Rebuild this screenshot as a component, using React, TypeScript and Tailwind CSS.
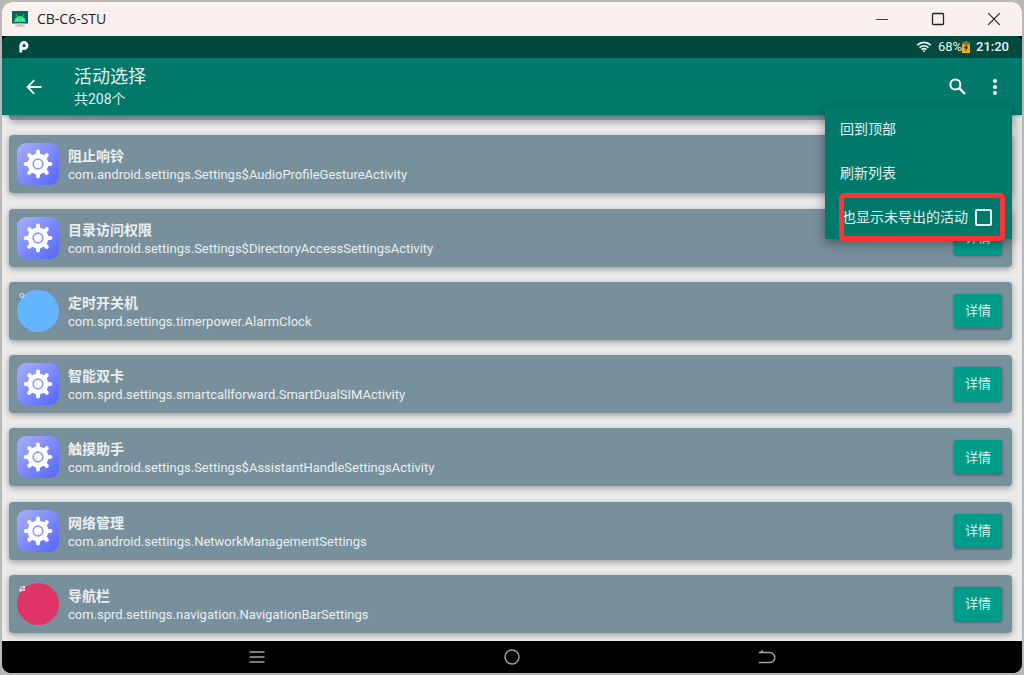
import type { ReactNode } from "react";

type Activity = {
  title: string;
  name: string;
  icon: "gear" | "blue" | "pink";
};

const activities: Activity[] = [
  {
    title: "阻止响铃",
    name: "com.android.settings.Settings$AudioProfileGestureActivity",
    icon: "gear",
  },
  {
    title: "目录访问权限",
    name: "com.android.settings.Settings$DirectoryAccessSettingsActivity",
    icon: "gear",
  },
  {
    title: "定时开关机",
    name: "com.sprd.settings.timerpower.AlarmClock",
    icon: "blue",
  },
  {
    title: "智能双卡",
    name: "com.sprd.settings.smartcallforward.SmartDualSIMActivity",
    icon: "gear",
  },
  {
    title: "触摸助手",
    name: "com.android.settings.Settings$AssistantHandleSettingsActivity",
    icon: "gear",
  },
  {
    title: "网络管理",
    name: "com.android.settings.NetworkManagementSettings",
    icon: "gear",
  },
  {
    title: "导航栏",
    name: "com.sprd.settings.navigation.NavigationBarSettings",
    icon: "pink",
  },
];

const teeth = [0, 45, 90, 135, 180, 225, 270, 315];

function GearIcon() {
  return (
    <svg viewBox="0 0 42 42" className="size-[42px] shrink-0">
      <defs>
        <linearGradient id="gear-bg" x1="0" y1="0" x2="1" y2="1">
          <stop offset="0.05" stopColor="#a3adfb" />
          <stop offset="0.9" stopColor="#5d6cfb" />
        </linearGradient>
      </defs>
      <rect width="42" height="42" rx="9" fill="url(#gear-bg)" />
      <circle cx="21" cy="21" r="10.4" fill="#fff" />
      {teeth.map((angle) => (
        <path
          key={angle}
          d="M17.6 12 L19 10.4 V8.6 A2 2 0 0 1 23 8.6 V10.4 L24.4 12 Z"
          fill="#fff"
          transform={`rotate(${angle} 21 21)`}
        />
      ))}
      <circle
        cx="21"
        cy="21"
        r="4.8"
        fill="none"
        stroke="#8f9df0"
        strokeWidth="1.7"
      />
    </svg>
  );
}

function ActivityIcon({ icon }: { icon: Activity["icon"] }) {
  if (icon === "gear") return <GearIcon />;
  return (
    <svg viewBox="0 0 42 42" className="size-[42px] shrink-0">
      <circle cx="21" cy="21" r="21" fill={icon === "blue" ? "#64b5ff" : "#e03468"} />
      {icon === "blue" ? (
        <circle cx="5" cy="5.5" r="2" fill="none" stroke="#d5dfe5" strokeWidth="1.2" />
      ) : (
        <path d="M2.5 5.6h2.8v2.8H2.5zM5.6 3H8v2.2H5.6zM6 6h2v2H6zM3 3.4h1.4v1H3z" fill="#e8e4ea" />
      )}
    </svg>
  );
}

function ActivityCard({ title, name, icon }: Activity) {
  return (
    <li className="flex h-[58px] items-center rounded bg-[#78909c] pl-2 pr-[10px] shadow-[0_2px_6px_rgba(0,0,0,0.35)]">
      <ActivityIcon icon={icon} />
      <div className="ml-[9px] min-w-0 flex-1 pt-[2px] text-[#e9eef0]">
        <h2 className="text-[14px] font-bold leading-5">{title}</h2>
        <p className="truncate text-[13px] leading-[18px]">{name}</p>
      </div>
      <button className="h-[34px] w-12 rounded-[2px] bg-[#009b89] text-[13px] text-[#d5f2ed] shadow-[0_1px_3px_rgba(0,0,0,0.4)]">
        详情
      </button>
    </li>
  );
}

function NavButton({ label, children }: { label: string; children: ReactNode }) {
  return (
    <button
      aria-label={label}
      className="col-span-2 flex items-center justify-center"
    >
      <svg
        viewBox="0 0 18 18"
        className="size-[18px]"
        fill="none"
        stroke="#a3a3a3"
        strokeWidth="1.4"
      >
        {children}
      </svg>
    </button>
  );
}

function TitleBar() {
  return (
    <header className="flex h-[34px] items-center bg-[#f9f1ef] pl-[10px] text-[#1f1f1f]">
      <svg viewBox="0 0 16 16" className="size-4">
        <rect width="16" height="12.5" fill="#07665c" />
        <path d="M2 11a6 6 0 0 1 12 0z" fill="#3ddc84" />
        <path d="M4 3l1.6 3M12 3l-1.6 3" stroke="#3ddc84" strokeWidth="0.8" />
        <circle cx="5.4" cy="8.6" r="0.7" fill="#fff" />
        <circle cx="10.6" cy="8.6" r="0.7" fill="#fff" />
        <path d="M5 12.5h6v1.3h2V16H3v-2.2h2z" fill="#cfcccb" />
      </svg>
      <h1 className="ml-[9px] flex-1 font-['Open_Sans',sans-serif] text-[14px] leading-5">
        CB-C6-STU
      </h1>
      <div className="flex h-full">
        <button aria-label="最小化" className="flex w-14 items-center justify-center">
          <svg viewBox="0 0 14 14" className="size-[14px]" stroke="#444" strokeWidth="1.1">
            <path d="M1 7.5h12" />
          </svg>
        </button>
        <button aria-label="最大化" className="flex w-14 items-center justify-center">
          <svg viewBox="0 0 14 14" className="size-[14px]" fill="none" stroke="#222" strokeWidth="1.3">
            <rect x="1.5" y="1.5" width="11" height="11" rx="1" />
          </svg>
        </button>
        <button aria-label="关闭" className="flex w-14 items-center justify-center">
          <svg viewBox="0 0 14 14" className="size-[14px]" stroke="#222" strokeWidth="1.2">
            <path d="M1.2 1.2l11.6 11.6M12.8 1.2L1.2 12.8" />
          </svg>
        </button>
      </div>
    </header>
  );
}

function StatusBar() {
  return (
    <div className="flex h-[22px] items-center justify-between rounded-t-[6px] bg-[#00493f] pl-[17px] pr-[13px] text-[#eef5f4]">
      {/* rounded Android P mark: stem and ring */}
      <svg viewBox="0 0 10 12" className="h-3 w-[10px]">
        <rect x="0.4" y="4" width="2.8" height="7.6" rx="0.6" fill="#fff" />
        <circle cx="5" cy="4.6" r="3.1" fill="none" stroke="#fff" strokeWidth="2.8" />
      </svg>
      <div className="flex items-center text-[13px] font-medium">
        <svg viewBox="0 0 16 12" className="h-3 w-4" fill="none" stroke="#e6f0ee" strokeWidth="1.7">
          <path d="M1.2 4.2a9.6 9.6 0 0 1 13.6 0M3.5 6.6a6.4 6.4 0 0 1 9 0M5.6 8.7a3.4 3.4 0 0 1 4.8 0" />
          <path d="M6.4 9.4h3.2L8 11.4z" fill="#e6f0ee" stroke="none" />
        </svg>
        <span className="ml-[6px] font-normal">68%</span>
        <svg viewBox="0 0 8 12" className="h-3 w-2">
          <path d="M2.4 0h3.2v1.3H8V4H0V1.3h2.4z" fill="#7d7040" />
          <path d="M0 3.5h8V12H0z" fill="#ffad05" />
          <path d="M4.8 2.6L1.8 7.2h1.8v3.2l2.8-4.6H4.8z" fill="#3d3c1c" />
        </svg>
        <span className="ml-[6px]">21:20</span>
      </div>
    </div>
  );
}

function AppBar() {
  return (
    <div className="relative z-10 flex h-[57px] items-center bg-[#00796b] pl-5 pr-[15px] text-white shadow-[0_1px_3px_rgba(0,0,0,0.3)]">
      <button aria-label="返回" className="flex size-6 items-center justify-center">
        <svg viewBox="0 0 16 16" className="size-4" fill="none" stroke="#fff" strokeWidth="1.8">
          <path d="M15.5 8H2M8.2 1.2L1.6 8l6.6 6.8" />
        </svg>
      </button>
      <div className="ml-7 flex-1 text-[#e2efed]">
        <div className="text-[18px] leading-6">活动选择</div>
        <div className="text-[14px] leading-5">共208个</div>
      </div>
      <button aria-label="搜索" className="flex size-6 items-center justify-center">
        <svg viewBox="0 0 17 17" className="size-[17px]" fill="none" stroke="#fff" strokeWidth="2">
          <circle cx="6.4" cy="6.4" r="5" />
          <path d="M10.2 10.2l5.8 5.8" strokeWidth="2.4" />
        </svg>
      </button>
      <button aria-label="更多" className="ml-[14px] flex size-6 items-center justify-center">
        <svg viewBox="0 0 4 16" className="h-4 w-1" fill="#fff">
          <circle cx="2" cy="2" r="2" />
          <circle cx="2" cy="8" r="2" />
          <circle cx="2" cy="14" r="2" />
        </svg>
      </button>
    </div>
  );
}

function OverflowMenu() {
  return (
    <div className="absolute right-[10px] top-[105px] z-20 w-[187px] bg-[#00796b] text-[14px] text-[#e4f1ef] shadow-[0_4px_12px_rgba(0,0,0,0.4)]">
      <button className="flex h-11 w-full items-center pl-[15px]">回到顶部</button>
      <button className="flex h-11 w-full items-center pl-[15px]">刷新列表</button>
      <label className="flex h-11 items-center justify-between pl-[17px] pr-5">
        也显示未导出的活动
        <input
          type="checkbox"
          className="size-[17px] appearance-none rounded-[2px] border-2 border-[#e4f1ef] checked:bg-[#e4f1ef]"
        />
      </label>
      {/* highlight around the last entry */}
      <div className="pointer-events-none absolute -bottom-[2px] left-[14px] right-[7px] h-12 rounded-[5px] border-[5px] border-[#ff3434]" />
    </div>
  );
}

export default function App() {
  return (
    <div className="flex min-h-screen flex-col bg-[#b9b7b7] p-[2px] font-['Roboto','Noto_Sans_CJK_SC',sans-serif]">
      <div className="relative flex flex-1 flex-col overflow-hidden rounded-[9px] bg-black">
        <TitleBar />
        <StatusBar />
        <AppBar />
        <OverflowMenu />
        <main className="flex flex-1 flex-col bg-[#ebebeb] pb-2 pl-[7px] pr-[10px]">
          <ul className="flex flex-1 flex-col justify-between gap-y-3">
            {/* bottom edge of the card scrolled under the bar */}
            <li
              aria-hidden="true"
              className="h-[5px] rounded-b bg-[#78909c] shadow-[0_2px_6px_rgba(0,0,0,0.35)]"
            />
            {activities.map((activity) => (
              <ActivityCard key={activity.name} {...activity} />
            ))}
          </ul>
        </main>
        <nav className="grid h-8 grid-cols-8 bg-black">
          <div aria-hidden="true" />
          <NavButton label="菜单">
            <path d="M1.5 4h15M1.5 9h15M1.5 14h15" />
          </NavButton>
          <NavButton label="主页">
            <circle cx="9" cy="9" r="7" />
          </NavButton>
          <NavButton label="后退">
            <path d="M1 4.5h10.8a5 5 0 0 1 0 10H1" />
            <path d="M1 4.5L5 1.8v2.4z" fill="#a3a3a3" stroke="none" />
          </NavButton>
        </nav>
      </div>
    </div>
  );
}
